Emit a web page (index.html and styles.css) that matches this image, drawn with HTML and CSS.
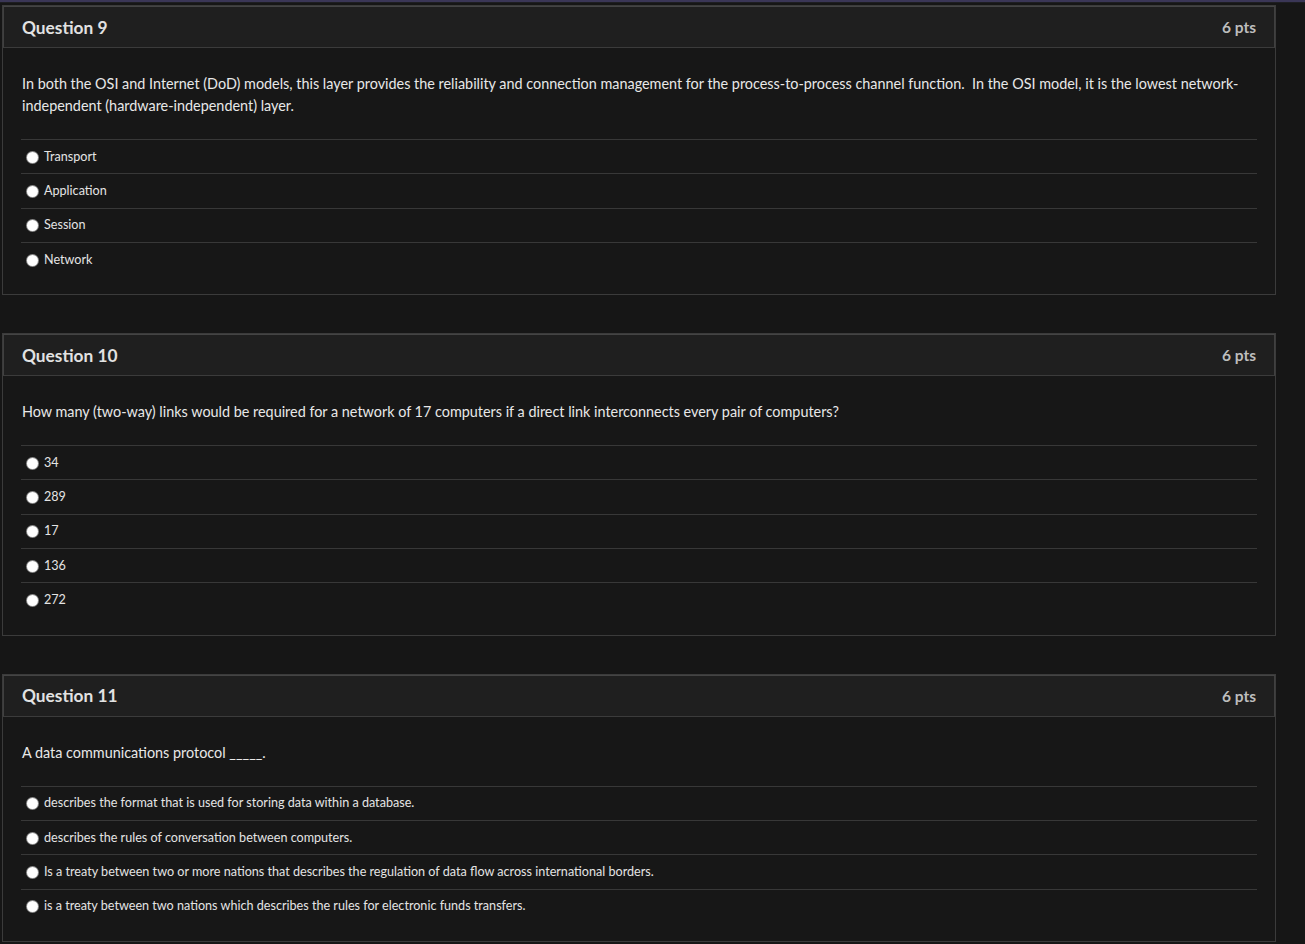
FILE: index.html
```html
<!DOCTYPE html>
<html lang="en">
<head>
<meta charset="utf-8">
<title>Quiz</title>
<link rel="stylesheet" href="styles.css">
</head>
<body>
<div class="topbar"></div>
<main class="quiz">
  <section class="question">
    <header class="q-header">
      <h2 class="q-title">Question 9</h2>
      <span class="q-pts">6 pts</span>
    </header>
    <div class="q-body">
      <p class="q-text">In both the OSI and Internet (DoD) models, this layer provides the reliability and connection management for the process-to-process channel function.&nbsp; In the OSI model, it is the lowest network-independent (hardware-independent) layer.</p>
      <ul class="answers">
        <li class="answer"><span class="radio"></span><span class="a-text">Transport</span></li>
        <li class="answer"><span class="radio"></span><span class="a-text">Application</span></li>
        <li class="answer"><span class="radio"></span><span class="a-text">Session</span></li>
        <li class="answer"><span class="radio"></span><span class="a-text">Network</span></li>
      </ul>
    </div>
  </section>

  <section class="question">
    <header class="q-header">
      <h2 class="q-title">Question 10</h2>
      <span class="q-pts">6 pts</span>
    </header>
    <div class="q-body">
      <p class="q-text">How many (two-way) links would be required for a network of 17 computers if a direct link interconnects every pair of computers?</p>
      <ul class="answers">
        <li class="answer"><span class="radio"></span><span class="a-text">34</span></li>
        <li class="answer"><span class="radio"></span><span class="a-text">289</span></li>
        <li class="answer"><span class="radio"></span><span class="a-text">17</span></li>
        <li class="answer"><span class="radio"></span><span class="a-text">136</span></li>
        <li class="answer"><span class="radio"></span><span class="a-text">272</span></li>
      </ul>
    </div>
  </section>

  <section class="question">
    <header class="q-header">
      <h2 class="q-title">Question 11</h2>
      <span class="q-pts">6 pts</span>
    </header>
    <div class="q-body">
      <p class="q-text">A data communications protocol _____.</p>
      <ul class="answers">
        <li class="answer"><span class="radio"></span><span class="a-text">describes the format that is used for storing data within a database.</span></li>
        <li class="answer"><span class="radio"></span><span class="a-text">describes the rules of conversation between computers.</span></li>
        <li class="answer"><span class="radio"></span><span class="a-text">Is a treaty between two or more nations that describes the regulation of data flow across international borders.</span></li>
        <li class="answer"><span class="radio"></span><span class="a-text">is a treaty between two nations which describes the rules for electronic funds transfers.</span></li>
      </ul>
    </div>
  </section>
</main>
</body>
</html>
```

FILE: styles.css
```css
* { box-sizing: border-box; }

html, body {
  margin: 0;
  padding: 0;
  background: #161616;
  height: 944px;
  overflow: hidden;
}

body {
  font-family: Lato, "Open Sans", "Liberation Sans", sans-serif;
  color: #e6e6e6;
}

.topbar {
  height: 2px;
  background: #3a3656;
  border-bottom: 1px solid #1e1e22;
  box-sizing: content-box;
}

.quiz {
  width: 1274px;
  margin: 2px 0 0 2px;
  display: flex;
  flex-direction: column;
  gap: 38px;
}

.question {
  border: 1px solid #3b3b3b;
  background: #171717;
}

.q-header {
  height: 42px;
  background: #1f1f1f;
  border: 1px solid #3b3b3b;
  border-left-color: #404040;
  border-right-color: #404040;
  border-top-color: #444444;
  display: flex;
  align-items: center;
  justify-content: space-between;
  padding: 0 18px 0 18px;
}

.q-title {
  margin: 0;
  font-size: 17.3px;
  font-weight: 700;
  color: #e2e2e2;
}

.q-pts {
  font-size: 15.5px;
  font-weight: 700;
  color: #bdbdbd;
}

.q-body {
  padding: 25px 18px 18px 18px;
}

.q-text {
  margin: 0 0 22px 1px;
  font-size: 14.4px;
  line-height: 22px;
  color: #e8e8e8;
}

.answers {
  list-style: none;
  margin: 0;
  padding: 0;
}

.answer {
  height: 34.3px;
  border-top: 1px solid #383838;
  display: flex;
  align-items: center;
  padding-left: 5px;
  padding-bottom: 1px;
}

.radio {
  width: 11px;
  height: 11px;
  border-radius: 50%;
  background: #ffffff;
  box-shadow: 0 0 0 1px #8a8a8a;
  flex: none;
  margin-left: 1px;
  margin-right: 6px;
  margin-top: 2px;
}

.a-text {
  font-size: 12.6px;
  color: #e4e4e4;
}
```
